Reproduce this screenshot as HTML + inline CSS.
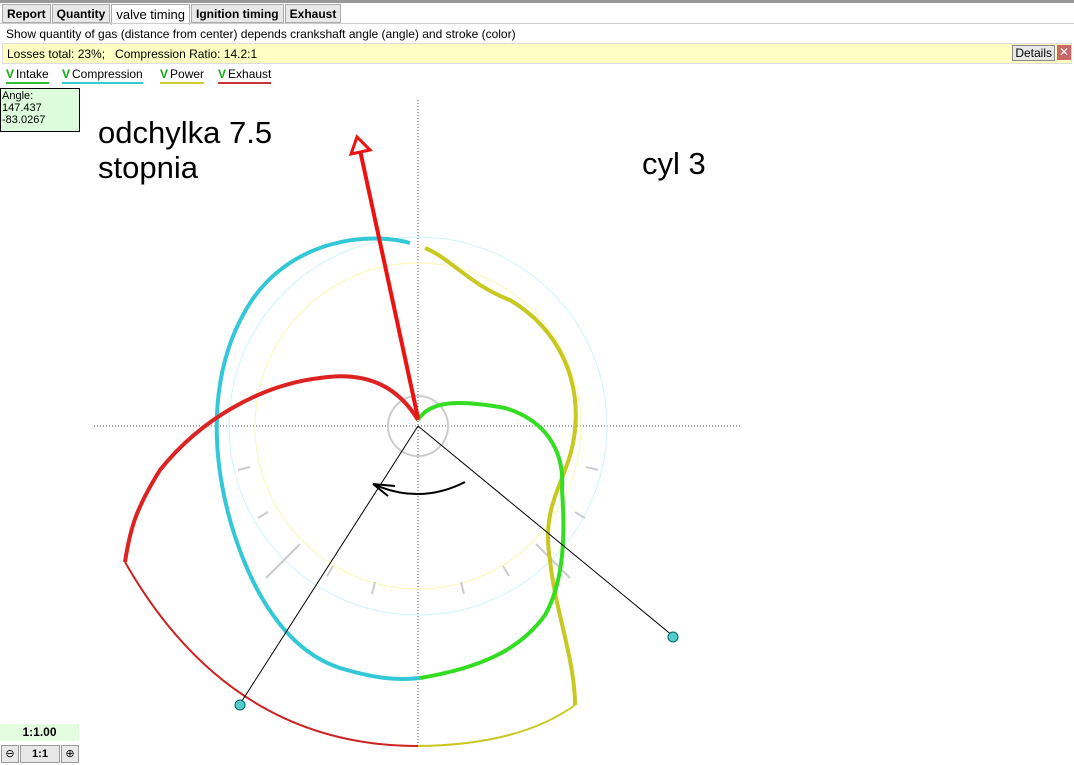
<!DOCTYPE html>
<html><head><style>
body{margin:0;width:1074px;height:765px;background:#fff;font-family:"Liberation Sans",sans-serif;font-size:12px;position:relative;overflow:hidden}
.top{position:absolute;left:0;top:0;width:1074px;height:3px;background:#999}
.tabs{position:absolute;top:4px;left:2px;height:19px;display:flex}
.tab{border:1px solid #aaa;background:#e8e8e8;padding:2px 4px;font-weight:bold;font-size:12px;margin-right:1px;height:13px}
.tab.a{background:#fff;font-weight:normal;height:16px;border-bottom:none;font-size:13px}
.tabline{position:absolute;top:23px;left:0;width:1074px;border-top:1px solid #ccc}
.desc{position:absolute;top:27px;left:6px;font-size:12px}
.loss{position:absolute;top:43px;left:2px;width:1068px;height:19px;background:#ffffc4;border:1px solid #ddd}
.loss span{position:absolute;left:4px;top:3px}
.det{position:absolute;right:16px;top:1px;border:1px solid #888;background:#e8e8e8;padding:0 2px;font-size:12px}
.x{position:absolute;right:0;top:1px;width:14px;height:15px;background:#c66;color:#fff;font-size:12px;text-align:center;line-height:15px}
.chk{position:absolute;top:67px;font-size:12px;padding-bottom:1px}
.chk b{color:#1a1;font-weight:bold;margin-right:2px}
.ang{position:absolute;left:0;top:88px;width:76px;height:40px;background:#dcfcdc;border:1px solid #000;font-size:11px;line-height:12px;padding:1px}
.left{position:absolute;left:0;top:130px;width:79px;height:635px}
.zoom{position:absolute;left:0;top:724px;width:79px;height:17px;background:#e4fce0;font-weight:bold;text-align:center;line-height:17px}
.btn{position:absolute;top:745px;height:16px;border:1px solid #999;background:#e8e8e8;text-align:center;font-size:11px;line-height:16px}
svg{position:absolute;left:0;top:0}
</style></head><body>
<div class="top"></div>
<div class="tabs"><div class="tab">Report</div><div class="tab">Quantity</div><div class="tab a">valve timing</div><div class="tab">Ignition timing</div><div class="tab">Exhaust</div></div>
<div class="tabline"></div>
<div class="desc">Show quantity of gas (distance from center) depends crankshaft angle (angle) and stroke (color)</div>
<div class="loss"><span>Losses total: 23%;&nbsp;&nbsp; Compression Ratio: 14.2:1</span><div class="det">Details</div><div class="x">✕</div></div>
<div class="chk" style="left:6px;border-bottom:2px solid #3b3"><b>V</b>Intake</div>
<div class="chk" style="left:62px;border-bottom:2px solid #3cc"><b>V</b>Compression</div>
<div class="chk" style="left:160px;border-bottom:2px solid #cc3"><b>V</b>Power</div>
<div class="chk" style="left:218px;border-bottom:2px solid #c33"><b>V</b>Exhaust</div>
<div class="ang">Angle:<br>147.437<br>-83.0267</div>
<div class="left"></div>
<div class="zoom">1:1.00</div>
<div class="btn" style="left:1px;width:16px">⊖</div>
<div class="btn" style="left:20px;width:38px;font-weight:bold">1:1</div>
<div class="btn" style="left:61px;width:16px">⊕</div>
<svg width="1074" height="765" viewBox="0 0 1074 765">
<line x1="94" y1="426" x2="740" y2="426" stroke="#555" stroke-dasharray="1,2"/>
<line x1="418" y1="100" x2="418" y2="748" stroke="#555" stroke-dasharray="1,2"/>
<circle cx="418" cy="426" r="189" fill="none" stroke="#d0f4f8"/>
<circle cx="418" cy="426" r="163" fill="none" stroke="#fafab0"/>
<circle cx="418" cy="426" r="30" fill="none" stroke="#ccc" stroke-width="2"/>
<g stroke="#ccc" stroke-width="2">
<line x1="238" y1="470" x2="250" y2="467"/><line x1="258" y1="518" x2="268" y2="512"/>
<line x1="266" y1="578" x2="300" y2="544"/><line x1="327" y1="576" x2="333" y2="566"/>
<line x1="372" y1="594" x2="375" y2="582"/><line x1="464" y1="594" x2="461" y2="582"/>
<line x1="509" y1="576" x2="503" y2="566"/><line x1="570" y1="578" x2="536" y2="544"/>
<line x1="585" y1="518" x2="575" y2="512"/><line x1="598" y1="470" x2="586" y2="467"/>
</g>
<path d="M410,243 C370,232 295,238 252,300 C212,360 208,440 230,520 C250,590 285,650 340,668 C380,680 400,680 420,678" fill="none" stroke="#33c8d8" stroke-width="4"/>
<path d="M425,248 C450,258 470,285 510,300 C560,330 580,380 575,430 C570,480 540,500 550,560 C555,610 575,660 575,705" fill="none" stroke="#c8c820" stroke-width="4"/>
<path d="M575,705 Q520,745 418,746" fill="none" stroke="#c8c820" stroke-width="2"/>
<path d="M418,420 C430,400 460,400 505,408 C545,420 565,450 562,490 C565,530 565,580 545,615 C520,650 480,668 420,678" fill="none" stroke="#33dd22" stroke-width="4"/>
<path d="M418,420 C400,390 370,370 320,378 C260,385 200,420 160,470 C135,510 130,530 125,562" fill="none" stroke="#dd2222" stroke-width="4"/>
<path d="M125,562 Q230,746 418,746" fill="none" stroke="#cc2222" stroke-width="2"/>
<line x1="418" y1="426" x2="240" y2="704" stroke="#000"/>
<line x1="418" y1="426" x2="673" y2="636" stroke="#000"/>
<circle cx="240" cy="705" r="5" fill="#5cc" stroke="#066"/>
<circle cx="673" cy="637" r="5" fill="#5cc" stroke="#066"/>
<path d="M465,482 Q420,505 373,484 M373,484 L395,486 M373,484 L388,496" fill="none" stroke="#000" stroke-width="2"/>
<line x1="418" y1="418" x2="360" y2="150" stroke="#ee1111" stroke-width="4"/>
<path d="M351,154 L357,137 L370,150 Z" fill="#fff" stroke="#ee1111" stroke-width="3"/>
<text x="98" y="143" font-family="Liberation Sans" font-size="31">odchylka 7.5</text>
<text x="98" y="178" font-family="Liberation Sans" font-size="31">stopnia</text>
<text x="642" y="174" font-family="Liberation Sans" font-size="31">cyl 3</text>
</svg>
</body></html>
